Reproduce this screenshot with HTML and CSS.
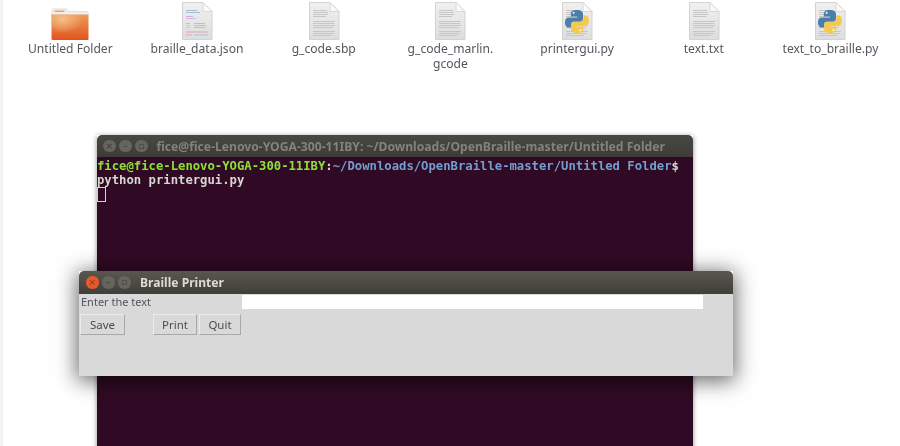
FILE: index.html
```html
<!DOCTYPE html>
<html lang="en">
<head>
<meta charset="utf-8">
<title>Braille Printer</title>
<link rel="stylesheet" href="styles.css">
</head>
<body>
<svg class="defs" width="0" height="0" aria-hidden="true">
  <defs>
    <linearGradient id="folderBody" x1="0" y1="0" x2="0" y2="1">
      <stop offset="0" stop-color="#eb9b5c"/>
      <stop offset="1" stop-color="#e2531c"/>
    </linearGradient>
    <radialGradient id="folderGlow" cx=".3" cy=".2" r=".55">
      <stop offset="0" stop-color="#f6c68e" stop-opacity=".85"/>
      <stop offset="1" stop-color="#f6c68e" stop-opacity="0"/>
    </radialGradient>
    <linearGradient id="paper" x1="0" y1="0" x2="0" y2="1">
      <stop offset="0" stop-color="#f0f0f0"/>
      <stop offset="1" stop-color="#dddddd"/>
    </linearGradient>
    <symbol id="sheet" viewBox="0 0 32 38">
      <path d="M1.500 .5H22L31 9.500V37.500H1.500Z" fill="url(#paper)" stroke="#d2d2d2"/>
      <path d="M22 .5V9.500H31Z" fill="#fafafa" stroke="#d8d8d8"/>
    </symbol>
    <symbol id="lines" viewBox="0 0 32 38">
      <path d="M5 8.500H19M5 10.500H20M5 12.500H20M5 14.500H18M5 19.500H27M5 21.500H26M5 23.500H27M5 25.500H25M5 29.500H27M5 31.500H26M5 33.500H23" stroke="#c6c6c6" stroke-width="1.200"/>
    </symbol>
    <symbol id="python" viewBox="0 0 32 38">
      <path d="M15.800 8C11 8 9.800 9.600 9.800 12V14.500H16.200V15.500H7.500C5 15.500 4 18 4 20.500S5.200 25.500 7.500 25.500H10V22.500C10 20.500 11.500 19.500 13.500 19.500H19C20.800 19.500 22 18.300 22 16.500V12C22 9.600 20.200 8 15.800 8Z" fill="#4b7ea8"/>
      <circle cx="12.600" cy="10.800" r="1.100" fill="#e6eef5"/>
      <path d="M16.200 31C21 31 22.200 29.400 22.200 27V24.500H15.800V23.500H24.500C27 23.500 28 21 28 18.500S26.800 13.500 24.500 13.500H22.500V16.500C22.500 18.500 20.500 20 18.800 20H13C11.200 20 10 21.200 10 23V27C10 29.400 11.800 31 16.200 31Z" fill="#f4c94f"/>
      <circle cx="19.400" cy="28.200" r="1.100" fill="#fff6d5"/>
    </symbol>
  </defs>
</svg>

<main class="desktop">
  <ul class="files">
    <li class="file">
      <svg class="icon" viewBox="0 0 38 38">
        <path d="M1 14V8.500C1 7.500 1.600 7 2.500 7H15.500L18 9.500H36C36.800 9.500 37 10 37 11V16H1Z" fill="#f2f0ee" stroke="#d8d6d4" stroke-width=".7"/>
        <rect x="3.500" y="8.600" width="10" height="1.200" fill="#ef8a52"/>
        <path d="M.5 12.500H37.500V36.500C37.500 37.500 37 38 36 38H2C1 38 .5 37.500 .5 36.500Z" fill="url(#folderBody)"/>
        <path d="M.5 12.500H37.500V36.500C37.500 37.500 37 38 36 38H2C1 38 .5 37.500 .5 36.500Z" fill="url(#folderGlow)"/>
      </svg>
      <span class="name">Untitled Folder</span>
    </li>
    <li class="file">
      <svg class="icon" viewBox="0 0 32 38">
        <use href="#sheet" width="32" height="38"/>
        <path d="M5 8.500H16M5 10.500H19" stroke="#a9bacd"/>
        <path d="M5 14.500H12" stroke="#dba6d5"/><path d="M5 16.500H15" stroke="#c9bde0"/>
        <path d="M5 21.500H9" stroke="#a8d6a4"/><path d="M13 21.500H24M13 23.500H25" stroke="#acc3d9"/>
        <path d="M5 23.500H9M5 25.500H9" stroke="#b2dba9"/><path d="M13 25.500H24" stroke="#acc3d9"/>
        <path d="M5 30H27" stroke="#e0a3b1"/><path d="M5 33H11" stroke="#e0ab9b"/><path d="M13 33H27" stroke="#9dc3dc"/>
      </svg>
      <span class="name">braille_data.json</span>
    </li>
    <li class="file">
      <svg class="icon" viewBox="0 0 32 38"><use href="#sheet" width="32" height="38"/><use href="#lines" width="32" height="38"/></svg>
      <span class="name">g_code.sbp</span>
    </li>
    <li class="file">
      <svg class="icon" viewBox="0 0 32 38"><use href="#sheet" width="32" height="38"/><use href="#lines" width="32" height="38"/></svg>
      <span class="name">g_code_marlin.<br>gcode</span>
    </li>
    <li class="file">
      <svg class="icon" viewBox="0 0 32 38"><use href="#sheet" width="32" height="38"/><use href="#lines" width="32" height="38"/><use href="#python" width="32" height="38"/></svg>
      <span class="name">printergui.py</span>
    </li>
    <li class="file">
      <svg class="icon" viewBox="0 0 32 38"><use href="#sheet" width="32" height="38"/><use href="#lines" width="32" height="38"/></svg>
      <span class="name">text.txt</span>
    </li>
    <li class="file">
      <svg class="icon" viewBox="0 0 32 38"><use href="#sheet" width="32" height="38"/><use href="#lines" width="32" height="38"/><use href="#python" width="32" height="38"/></svg>
      <span class="name">text_to_braille.py</span>
    </li>
  </ul>

  <section class="window terminal">
    <header class="titlebar titlebar-back">
      <div class="controls">
        <span class="ctl ctl-dim">×</span><span class="ctl ctl-dim">–</span><span class="ctl ctl-dim">▫</span>
      </div>
      <span class="term-title">fice@fice-Lenovo-YOGA-300-11IBY: ~/Downloads/OpenBraille-master/Untitled Folder</span>
    </header>
    <div class="term-body">
      <div><span class="prompt-user">fice@fice-Lenovo-YOGA-300-11IBY</span>:<span class="prompt-path">~/Downloads/OpenBraille-master/Untitled Folder</span>$</div>
      <div>python printergui.py</div>
      <div class="cursor"></div>
    </div>
  </section>

  <section class="window dialog">
    <header class="titlebar titlebar-front">
      <div class="controls">
        <span class="ctl ctl-close">×</span><span class="ctl ctl-dim">–</span><span class="ctl ctl-dim">▫</span>
      </div>
      <span class="dialog-title">Braille Printer</span>
    </header>
    <div class="dialog-body">
      <div class="entry-row">
        <label class="entry-label">Enter the text</label>
        <div class="entry"></div>
      </div>
      <div class="button-row">
        <button class="btn btn-save">Save</button>
        <button class="btn btn-print">Print</button>
        <button class="btn btn-quit">Quit</button>
      </div>
    </div>
  </section>
</main>
</body>
</html>
```
FILE: styles.css
```css
* { box-sizing: border-box; }

html, body {
  margin: 0;
  width: 900px;
  height: 446px;
  overflow: hidden;
  background: #fff;
}

.defs { position: absolute; }

.desktop {
  position: relative;
  width: 900px;
  height: 446px;
  overflow: hidden;
  padding-left: 3px;
  background: linear-gradient(to right, #f3f3f3 3px, #fff 3px);
  filter: blur(0.6px);
}

.files {
  list-style: none;
  margin: 0;
  padding: 2px 0 0 4px;
  display: flex;
}

.file {
  width: 126.7px;
  flex: none;
  display: flex;
  flex-direction: column;
  align-items: center;
}

.icon {
  display: block;
  height: 38px;
  width: auto;
}

.name {
  margin-top: 2px;
  text-align: center;
  font: 12.1px/14.5px "Noto Sans", "Open Sans", sans-serif;
  color: #55555f;
}

.window { position: absolute; }

.terminal {
  left: 97px;
  top: 135px;
  width: 596px;
  height: 340px;
  box-shadow: 0 1px 5px rgba(0, 0, 0, .45);
}

.titlebar {
  display: flex;
  align-items: center;
  border-radius: 5px 5px 0 0;
  background: linear-gradient(#4a4843, #3d3b37);
}

.titlebar-back {
  height: 22px;
  padding-left: 6px;
}

.controls {
  display: flex;
  gap: 3.5px;
}

.ctl {
  width: 12.500px;
  height: 12.500px;
  border-radius: 50%;
  display: flex;
  align-items: center;
  justify-content: center;
  font: 9px/1 "DejaVu Sans", sans-serif;
  color: #3b3a36;
}

.ctl-dim { background: #66645f; }

.ctl-close { background: #e9582a; color: #8f3414; }

.term-title {
  margin-left: 9px;
  font: bold 12.170px "Noto Sans", "Open Sans", sans-serif;
  color: #84827c;
  white-space: nowrap;
}

.term-body {
  height: 318px;
  background: #300a24;
  font: bold 12.240px/14px "DejaVu Sans Mono", monospace;
  color: #d8d6d0;
  white-space: nowrap;
  padding-top: 2px;
}

.prompt-user { color: #8ae234; }

.prompt-path { color: #729fcf; }

.cursor {
  width: 9px;
  height: 15px;
  border: 1px solid #d3d7cf;
}

.dialog {
  left: 79px;
  top: 271px;
  width: 654px;
  height: 105px;
  box-shadow: 0 3px 20px 2px rgba(0, 0, 0, .6);
}

.titlebar-front {
  height: 23px;
  padding-left: 7px;
  background: linear-gradient(#5a574f, #403e39);
}

.dialog-title {
  margin-left: 9.500px;
  font: bold 12.100px "Noto Sans", "Open Sans", sans-serif;
  color: #dfdbd2;
}

.dialog-body {
  height: 82px;
  background: #d9d9d9;
  padding: 1px 0 0 1px;
  font: 11.500px "Noto Sans", "Open Sans", sans-serif;
  color: #555560;
}

.entry-row {
  display: flex;
  align-items: flex-start;
  height: 14px;
}

.entry-label {
  width: 162px;
  padding-left: 1px;
  font-size: 11px;
  line-height: 13px;
}

.entry {
  width: 461px;
  height: 14px;
  background: #fff;
}

.button-row {
  display: flex;
  margin-top: 5px;
}

.btn {
  height: 21px;
  padding: 0;
  background: #d9d9d9;
  border: 1px solid;
  border-color: #ececec #a8a8a8 #a8a8a8 #ececec;
  font: inherit;
  color: #4d4d4d;
}

.btn-save { width: 45px; margin-right: 28px; }

.btn-print { width: 44px; margin-right: 2px; }

.btn-quit { width: 42px; }
```
